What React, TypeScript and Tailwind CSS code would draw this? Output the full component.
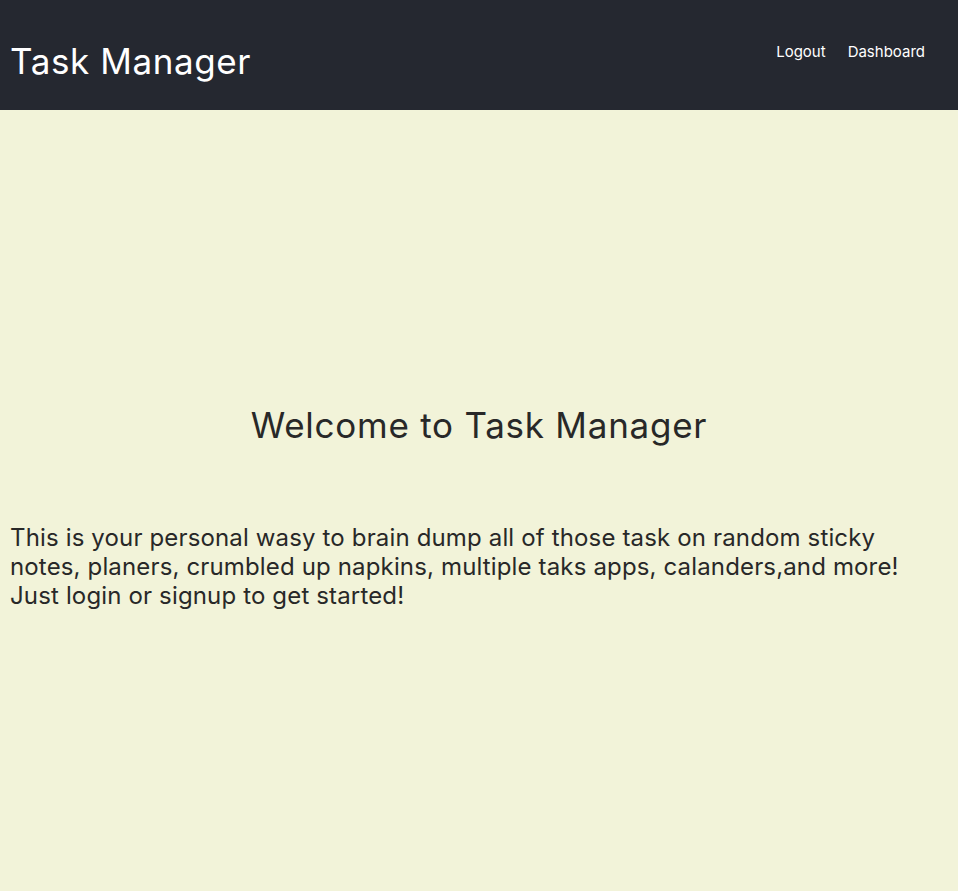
export default function App() {
  return (
    <div className="min-h-screen bg-[#f2f3d9] font-['Inter',sans-serif] text-[#282828]">
      <header className="h-[110px] bg-[#252830] flex items-start justify-between">
        <h1 className="text-[35px] leading-none tracking-[0.6px] text-white pl-[10px] pt-[44px]">Task Manager</h1>
        <nav className="flex gap-[22px] pt-[41px] pr-[33px] text-[15px] text-white">
          <a href="#">Logout</a>
          <a href="#">Dashboard</a>
        </nav>
      </header>
      <main className="px-[10px]">
        <h2 className="text-[35px] leading-none tracking-[0.75px] text-center pt-[298px]">Welcome to Task Manager</h2>
        <p className="text-[24px] leading-[29px] tracking-[0.15px] mt-[80px]">
          This is your personal wasy to brain dump all of those task on random sticky notes, planers, crumbled up napkins, multiple taks apps, calanders,and more! Just login or signup to get started!
        </p>
      </main>
    </div>
  );
}
